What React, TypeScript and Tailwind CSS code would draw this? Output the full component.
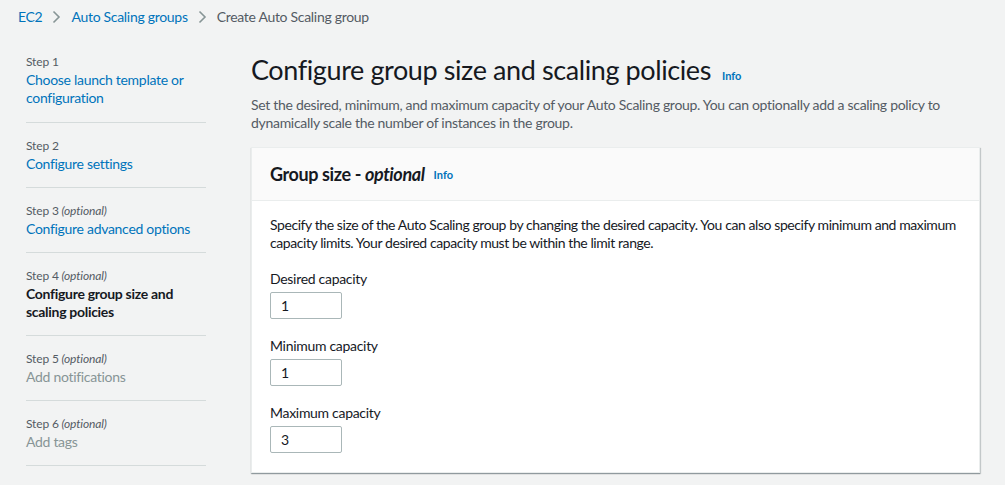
import React from "react";

const steps = [
  { n: "Step 1", opt: false, text: "Choose launch template or configuration", kind: "link" },
  { n: "Step 2", opt: false, text: "Configure settings", kind: "link" },
  { n: "Step 3", opt: true, text: "Configure advanced options", kind: "link" },
  { n: "Step 4", opt: true, text: "Configure group size and scaling policies", kind: "active" },
  { n: "Step 5", opt: true, text: "Add notifications", kind: "disabled" },
  { n: "Step 6", opt: true, text: "Add tags", kind: "disabled" },
  { n: "Step 7", opt: false, text: "Review", kind: "disabled" },
];

function Chevron() {
  return (
    <svg width="9" height="14" viewBox="0 0 9 14" className="mx-[10px]">
      <path d="M1.5 1.5 L7 7 L1.5 12.5" fill="none" stroke="#879596" strokeWidth="1.6" />
    </svg>
  );
}

function Field({ label, value }: { label: string; value: string }) {
  return (
    <div className="flex flex-col">
      <div className="text-[14px] leading-[20px] text-[#16191f]">{label}</div>
      <div className="mt-[3px] w-[72px] h-[27px] border border-[#aab7b8] rounded-[2px] bg-white flex items-center pl-[10px] text-[14px] text-[#16191f]">
        {value}
      </div>
    </div>
  );
}

export default function App() {
  return (
    <div
      className="w-[1005px] h-[485px] overflow-hidden bg-[#f2f3f3] text-[#16191f] tracking-[-0.3px]"
      style={{ fontFamily: "Lato, 'Liberation Sans', sans-serif" }}
    >
      <div className="flex items-center pl-[18px] pt-[7px] h-[20px] text-[14px] leading-[20px] box-content">
        <span className="text-[#0073bb]">EC2</span>
        <Chevron />
        <span className="text-[#0073bb]">Auto Scaling groups</span>
        <Chevron />
        <span className="text-[#545b64]">Create Auto Scaling group</span>
      </div>
      <div className="flex mt-[27px]">
        <div className="w-[180px] ml-[26px] shrink-0">
          {steps.map((s, i) => (
            <div key={i} className={i > 0 ? "border-t border-[#d5dbdb] pt-[15px] pb-[14px]" : "pb-[15px]"}>
              <div className="text-[12px] leading-[16px] text-[#545b64] tracking-[-0.15px]">
                {s.n}
                {s.opt && <i> (optional)</i>}
              </div>
              <div
                className={
                  "text-[14px] leading-[18px] mt-[1px] " +
                  (s.kind === "link"
                    ? "text-[#0073bb]"
                    : s.kind === "active"
                    ? "text-[#16191f] font-bold"
                    : "text-[#879596]")
                }
              >
                {s.text}
              </div>
            </div>
          ))}
        </div>
        <div className="ml-[45px] w-[729px] shrink-0">
          <div className="flex items-baseline -mt-[2px]">
            <h1 className="text-[27px] leading-[36px] text-[#16191f] tracking-[-0.4px]">Configure group size and scaling policies</h1>
            <span className="ml-[11px] text-[11px] font-bold text-[#0073bb] tracking-normal">Info</span>
          </div>
          <p className="mt-[8px] text-[14px] leading-[18px] text-[#545b64]">
            Set the desired, minimum, and maximum capacity of your Auto Scaling group. You can optionally add a scaling policy to dynamically scale the number of instances in the group.
          </p>
          <div className="mt-[15px] bg-white border border-[#eaeded] shadow-[0_1px_1px_0_rgba(0,28,36,0.3),1px_1px_1px_0_rgba(0,28,36,0.15)]">
            <div className="bg-[#fafafa] border-b border-[#eaeded] h-[53px] flex items-center px-[18px]">
              <span className="text-[18px] font-bold text-[#16191f] tracking-[-0.4px]">
                Group size - <i>optional</i>
              </span>
              <span className="ml-[9px] text-[11px] font-bold text-[#0073bb] mt-[2px] tracking-normal">Info</span>
            </div>
            <div className="px-[18px] pt-[15px] pb-[19px]">
              <p className="text-[14px] leading-[18px] text-[#16191f] tracking-[-0.42px]">
                Specify the size of the Auto Scaling group by changing the desired capacity. You can also specify minimum and maximum capacity limits. Your desired capacity must be within the limit range.
              </p>
              <div className="mt-[17px] flex flex-col gap-[17px]">
                <Field label="Desired capacity" value="1" />
                <Field label="Minimum capacity" value="1" />
                <Field label="Maximum capacity" value="3" />
              </div>
            </div>
          </div>
        </div>
      </div>
    </div>
  );
}
